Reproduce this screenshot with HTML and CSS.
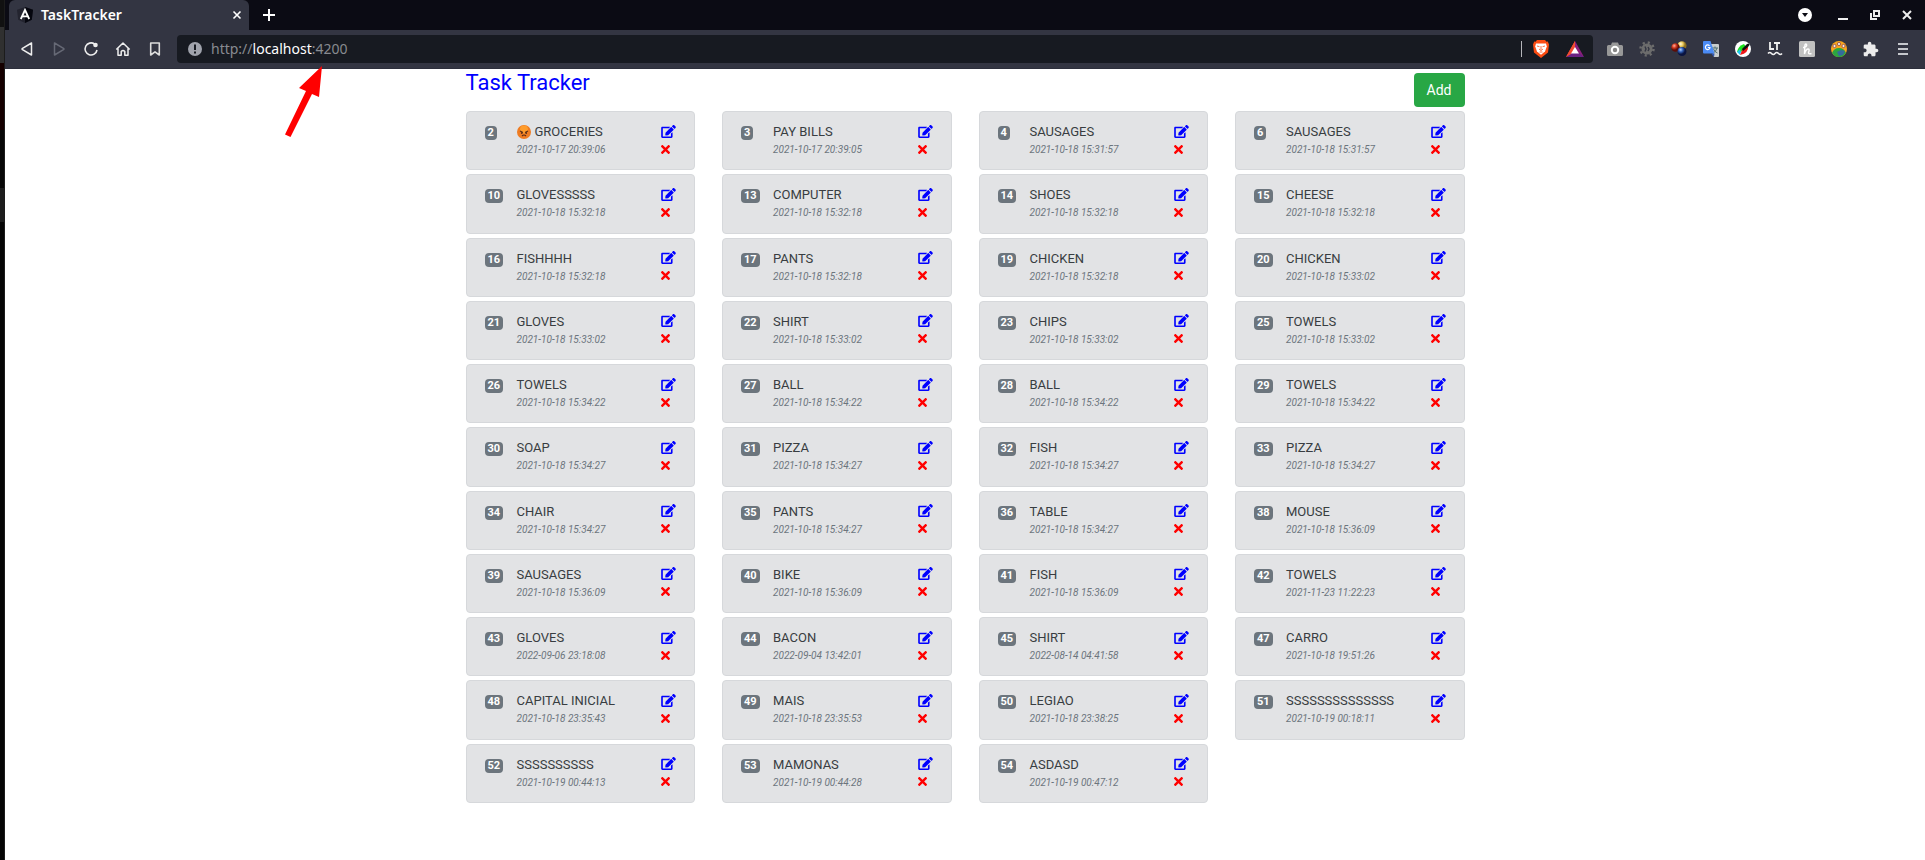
FILE: index.html
```html
<!DOCTYPE html>
<html lang="en">
<head>
<meta charset="utf-8">
<title>TaskTracker</title>
<link rel="stylesheet" href="styles.css">
</head>
<body>
<div class="desktop-edge" aria-hidden="true"><span class="edge-top"></span><span class="edge-gray"></span><span class="edge-red"></span><span class="edge-black"></span><span class="edge-item"></span></div>
<div class="window">
  <header class="browser">
    <div class="tab-strip">
      <div class="tab">
        <svg width="16" height="16" viewBox="0 0 16 16"><path d="M8 0l8 2.800-1.200 10L8 16l-6.800-3.200L0 2.800z" fill="#23242f"/><path d="M8 0l8 2.800-1.200 10L8 16z" fill="#05060e"/><path d="M3.800 12L8 3l4.200 9M5.500 9.300h5" fill="none" stroke="#fff" stroke-width="1.800"/></svg>
        <span class="tab-title">TaskTracker</span>
        <button class="tab-button" aria-label="Close tab"><svg width="10" height="10" viewBox="0 0 10 10"><path d="M1.500 1.500l7 7m0-7l-7 7" stroke="#fff" stroke-width="1.600"/></svg></button>
      </div>
      <button class="tool new-tab" aria-label="New tab"><svg width="12" height="12" viewBox="0 0 12 12"><path d="M6 0v12M0 6h12" stroke="#fff" stroke-width="2"/></svg></button>
      <div class="window-controls">
        <button class="tool tab-search" aria-label="Search tabs"><svg width="14" height="14" viewBox="0 0 14 14"><circle cx="7" cy="7" r="7" fill="#fff"/><path d="M4 5h6L7 9z" fill="#0b0b14"/></svg></button>
        <button class="tool" aria-label="Minimize"><svg width="10" height="10" viewBox="0 0 10 10"><path d="M0 9h10" stroke="#eee" stroke-width="2"/></svg></button>
        <button class="tool" aria-label="Restore"><svg width="10" height="10" viewBox="0 0 10 10"><path d="M4 1h5v5H4zM1 3v6h6" fill="none" stroke="#eee" stroke-width="2"/></svg></button>
        <button class="tool" aria-label="Close"><svg width="10" height="10" viewBox="0 0 10 10"><path d="M1 1l8 8m0-8L1 9" stroke="#eee" stroke-width="2"/></svg></button>
      </div>
    </div>
    <div class="toolbar">
      <button class="tool" aria-label="Back"><svg width="16" height="16" viewBox="0 0 16 16"><path d="M12.500 2v12L3.500 8.700q-.9-.7 0-1.400z" fill="none" stroke="#eee" stroke-width="1.500" stroke-linejoin="round"/></svg></button>
      <button class="tool" aria-label="Forward"><svg width="16" height="16" viewBox="0 0 16 16"><path d="M3.500 2v12l9-5.300q.9-.7 0-1.400z" fill="none" stroke="#666975" stroke-width="1.500" stroke-linejoin="round"/></svg></button>
      <button class="tool" aria-label="Reload"><svg width="16" height="16" viewBox="0 0 16 16"><path d="M11.500 3A6 6 0 1 0 14 9" fill="none" stroke="#eee" stroke-width="1.600"/><circle cx="12.500" cy="4" r="2.300" fill="#eee"/></svg></button>
      <button class="tool" aria-label="Home"><svg width="16" height="16" viewBox="0 0 16 16"><path d="M1.300 8.500L8 2l6.700 6.500M3 7.500v6.700h3.200v-3.700q1.800-2 3.600 0v3.700H13V7.500" fill="none" stroke="#eee" stroke-width="1.500" stroke-linejoin="round"/></svg></button>
      <button class="tool" aria-label="Bookmark"><svg width="16" height="16" viewBox="0 0 16 16"><path d="M3.700 2h8.600v12L8 10.800 3.700 14z" fill="none" stroke="#ddd" stroke-width="1.600" stroke-linejoin="round"/></svg></button>
      <div class="address-bar">
        <svg class="site-info" width="14" height="14" viewBox="0 0 14 14"><circle cx="7" cy="7" r="7" fill="#a0a3ac"/><path d="M7 2.500v5.500M7 9.500v2" stroke="#171a21" stroke-width="2"/></svg>
        <div class="address" role="textbox" contenteditable="true" spellcheck="false" aria-label="Address">http://<span class="address-host">localhost</span>:4200</div>
        <span class="address-divider"></span>
        <button class="shield" aria-label="Shields"><svg width="16" height="18" viewBox="0 0 16 18"><path d="M4 0h8l1.500 1.800 1.300-.2 1.200 3-1 8L8 18l-7-5.400-1-8 1.200-3 1.300.2z" fill="#fb4c12"/><path d="M3 3.500h10l.8 3-1.800 5L8 14.800 4 11.500l-1.800-5z" fill="#fff"/><path d="M4 6l2.500.7M12 6l-2.500.7M8 6v3.500M6 9l2 1.500L10 9M6.500 12h3" stroke="#fb4c12" stroke-width=".8" fill="none"/></svg></button>
        <button class="shield" aria-label="Rewards"><svg width="18" height="16" viewBox="0 0 18 16"><path d="M9 0L0 16l9-5z" fill="#ff4b2b"/><path d="M9 0l9 16-9-5z" fill="#8c1f7b"/><path d="M0 16h18l-5-4H5z" fill="#6b2183"/><path d="M9 0v6l-4 7-5 3z" fill="#f24b32"/><path d="M9 6l4 6.500H5z" fill="#fff"/></svg></button>
      </div>
      <button class="tool" aria-label="Screenshot"><svg width="16" height="14" viewBox="0 0 16 14"><path d="M1.500 3H4l1-2.500h6L12 3h2.500Q16 3 16 4.500v8q0 1.500-1.500 1.500h-13Q0 14 0 12.500v-8Q0 3 1.500 3z" fill="#989898"/><circle cx="8" cy="8" r="3.200" fill="#888" stroke="#fff" stroke-width="2"/></svg></button>
      <button class="tool" aria-label="Debugger"><svg width="16" height="16" viewBox="0 0 16 16"><circle cx="8" cy="8" r="5.500" fill="#6c6c6c"/><circle cx="8" cy="8" r="6.500" fill="none" stroke="#6c6c6c" stroke-width="2.500" stroke-dasharray="2.100 3"/><path d="M6 5.500l1 2.500-1 2.500M9 6l1 2-1 2" stroke="#333542" fill="none" stroke-width="1.400"/></svg></button>
      <button class="tool" aria-label="Color spheres"><svg width="16" height="16" viewBox="0 0 16 16"><defs><radialGradient id="r" cx=".35" cy=".3"><stop stop-color="#ffb0a0"/><stop offset=".5" stop-color="#d33b20"/><stop offset="1" stop-color="#5c0c08"/></radialGradient><radialGradient id="y" cx=".35" cy=".3"><stop stop-color="#fffbe0"/><stop offset=".5" stop-color="#f0d060"/><stop offset="1" stop-color="#8d7020"/></radialGradient><radialGradient id="b" cx=".35" cy=".3"><stop stop-color="#b0d0ff"/><stop offset=".5" stop-color="#3060b8"/><stop offset="1" stop-color="#0a1440"/></radialGradient></defs><circle cx="11" cy="4.800" r="4.500" fill="url(#y)"/><circle cx="4.500" cy="6.500" r="4.300" fill="url(#r)"/><circle cx="11" cy="10.500" r="4.500" fill="url(#b)"/></svg></button>
      <button class="tool" aria-label="Translate"><svg width="16" height="16" viewBox="0 0 16 16"><path d="M6 3h9q1 0 1 1v11q0 1-1 1h-4z" fill="#c8cccc"/><path d="M9 7h6M12 5.500V7m2 0q-1 4-4 5m.5-4q1 3 4 4" stroke="#4f6f70" fill="none"/><path d="M1 0h6.500l4 12.500H1q-1 0-1-1V1q0-1 1-1z" fill="#4b8bf5"/><path d="M8 12.500h3.500L11 16z" fill="#3157ac"/><path d="M6.500 4.800A2.300 2.300 0 1 0 7 6.500H4.800" stroke="#fff" stroke-width="1.200" fill="none"/></svg></button>
      <button class="tool" aria-label="Color picker"><svg width="16" height="16" viewBox="0 0 16 16"><circle cx="8" cy="8" r="8" fill="#fff"/><path d="M2 11Q3 5 9 3l2 3-5 5z" fill="#1ce01c"/><path d="M2 11l3-3 1 3-1 3z" fill="#20c5f0"/><path d="M5 14l3-7 5-2q1 7-8 9z" fill="#f01818"/><path d="M7 8l5-5 2-.5.5 1.500L13 6l-5 4z" fill="#111"/></svg></button>
      <button class="tool" aria-label="Grammar checker"><svg width="16" height="14" viewBox="0 0 16 14"><path d="M3 0v7h4M7 1h6M10 1v7" fill="none" stroke="#f1f1f1" stroke-width="1.800"/><path d="M1 11.500q1.700-2 3.500 0t3.500 0 3.500 0 3.500 0" fill="none" stroke="#f1f1f1" stroke-width="1.600"/></svg></button>
      <button class="tool" aria-label="Coupons"><svg width="16" height="16" viewBox="0 0 16 16"><rect width="16" height="16" rx="1.500" fill="#c1c1c1"/><path d="M4 6.500Q8.500 6 7.500 3.200 6 2 5.800 5.500L5.500 13q1.500-5 3.500-5t.5 3.500q0 2 3 1" fill="none" stroke="#fff" stroke-width="1.400"/></svg></button>
      <button class="tool" aria-label="World"><svg width="16" height="16" viewBox="0 0 16 16"><circle cx="8" cy="8" r="8" fill="#f7a51c"/><path d="M1 12q2-5 7-5t7 5a8 8 0 0 1-14 0z" fill="#2ca541"/><path d="M6 11l4-2 4 1-2 4-4 1z" fill="#356b9c"/><circle cx="3.500" cy="5" r="1.600" fill="#eee" stroke="#a65b50"/><circle cx="8" cy="3" r="1.600" fill="#eee" stroke="#a65b50"/><circle cx="12.500" cy="5" r="1.600" fill="#eee" stroke="#a65b50"/></svg></button>
      <button class="tool" aria-label="Extensions"><svg width="16" height="16" viewBox="1 0 23 23"><path fill="#ececec" d="M20.500 11H19V7c0-1.100-.9-2-2-2h-4V3.500C13 2.120 11.880 1 10.500 1S8 2.120 8 3.500V5H4c-1.100 0-1.990.9-1.990 2v3.800H3.500c1.490 0 2.700 1.210 2.700 2.700s-1.210 2.700-2.700 2.700H2V20c0 1.100.9 2 2 2h3.800v-1.500c0-1.490 1.210-2.700 2.700-2.700s2.700 1.210 2.700 2.700V22H17c1.100 0 2-.9 2-2v-4h1.500c1.380 0 2.500-1.120 2.500-2.500S21.880 11 20.500 11z"/></svg></button>
      <button class="tool" aria-label="Menu"><svg width="10" height="12" viewBox="0 0 10 12"><path d="M0 1h10M0 6h10M0 11h10" stroke="#c5c7cc" stroke-width="1.800"/></svg></button>
    </div>
  </header>
  <main class="container">
    <div class="page-header">
      <h1 class="page-title">Task Tracker</h1>
      <button class="add-button">Add</button>
    </div>
    <div class="task-list" id="tasks"></div>
  </main>
  <svg class="pointer-arrow" width="40" height="72" viewBox="0 0 40 72" aria-hidden="true"><path d="M37 0L14 22l7 3L0 68.500l5.500 2.500L27 28l7 3z" fill="#f00"/></svg>
</div>
<svg hidden>
  <symbol id="icon-edit" viewBox="0 0 576 512"><path d="M402.600 83.200l90.200 90.200c3.800 3.800 3.800 10 0 13.800L274.400 405.600l-92.800 10.300c-12.400 1.400-22.900-9.100-21.500-21.500l10.300-92.800L388.800 83.200c3.800-3.800 10-3.800 13.800 0zm162-22.900l-48.800-48.800c-15.200-15.200-39.900-15.200-55.200 0l-35.400 35.400c-3.800 3.800-3.800 10 0 13.800l90.200 90.200c3.800 3.800 10 3.800 13.800 0l35.400-35.400c15.200-15.300 15.200-40 0-55.200zM384 346.200V448H64V128h229.800c3.200 0 6.200-1.300 8.500-3.500l40-40c7.600-7.600 2.200-20.500-8.500-20.500H48C21.500 64 0 85.500 0 112v352c0 26.500 21.500 48 48 48h352c26.500 0 48-21.500 48-48V306.200c0-10.700-12.900-16-20.500-8.500l-40 40c-2.200 2.300-3.500 5.300-3.500 8.500z"/></symbol>
  <symbol id="icon-times" viewBox="0 0 352 512"><path d="M242.720 256l100.070-100.070c12.280-12.280 12.280-32.190 0-44.480l-22.240-22.240c-12.280-12.280-32.190-12.280-44.480 0L176 189.280 75.930 89.210c-12.280-12.280-32.190-12.280-44.480 0L9.210 111.450c-12.280 12.280-12.280 32.190 0 44.480L109.280 256 9.210 356.070c-12.280 12.280-12.280 32.190 0 44.480l22.240 22.240c12.280 12.280 32.200 12.280 44.480 0L176 322.720l100.070 100.070c12.280 12.280 32.200 12.280 44.480 0l22.240-22.240c12.280-12.280 12.280-32.190 0-44.480L242.720 256z"/></symbol>
  <symbol id="icon-angry" viewBox="0 0 14 14"><circle cx="7" cy="7" r="7" fill="#ef7c22"/><circle cx="7" cy="4.500" r="4" fill="#ff9d2c"/><path d="M3 6l3 1.500M11 6L8 7.500M5 11q2-2 4 0" fill="none" stroke="#5a2b18" stroke-width="1.100"/><circle cx="4.800" cy="8" r=".9" fill="#5a2b18"/><circle cx="9.200" cy="8" r=".9" fill="#5a2b18"/></symbol>
</svg>
<script src="tasks.js"></script>
</body>
</html>
```
FILE: styles.css
```css
* { box-sizing: border-box; }
body { margin: 0; min-height: 100vh; display: flex; background: #fff; color: #212529; font-family: Roboto, sans-serif; overflow-x: hidden; }
button { margin: 0; padding: 0; border: 0; background: none; font: inherit; cursor: pointer; }
svg { display: block; flex: none; }
svg[hidden] { display: none; }
.desktop-edge { width: 5px; flex: none; display: flex; flex-direction: column; background: #050505; border-right: 1px solid #1c1c1c; }
.edge-top { height: 27px; background: #111; }
.edge-gray { height: 36px; background: #303030; }
.edge-red { height: 67px; background: #150000; }
.edge-black { height: 58px; background: #070707; }
.edge-item { height: 34px; background: #1d1d1d; }
.window { position: relative; flex: 1; min-width: 0; }

.browser { font-family: "Noto Sans", sans-serif; color: #fff; }
.tab-strip { display: flex; height: 30px; padding: 0 2px 0 4px; background: #0b0b14; }
.tab { display: flex; align-items: center; gap: 8px; width: 240px; padding: 0 2px 0 8px; border-radius: 6px 6px 0 0; background: #333542; }
.tab-title { flex: 1; font-size: 14px; font-weight: 600; line-height: 20px; }
.tab-button { display: flex; align-items: center; justify-content: center; width: 20px; height: 20px; }
.window-controls { display: flex; margin-left: auto; }
.tab-search { margin-right: 6px; }
.toolbar { display: flex; align-items: center; height: 39px; padding: 0 6px; background: #333542; border-bottom: 1px solid #2d2f3c; }
.tool { display: flex; flex: none; align-items: center; justify-content: center; width: 32px; height: 30px; }
.new-tab { margin-left: 4px; }
.address-bar { display: flex; flex: 1; align-items: center; height: 28px; margin: 0 6px; padding: 0 1px 0 11px; border-radius: 4px; background: #171a21; }
.address { flex: 1; margin-left: 9px; font-size: 14px; line-height: 20px; color: #888b90; outline: 0; }
.address-host { color: #fff; }
.address-divider { width: 1px; height: 16px; margin-right: 2px; background: #b5b6ba; }
.shield { display: flex; align-items: center; justify-content: center; width: 34px; height: 28px; }

.container { max-width: 1025px; margin: 0 auto; padding: 0 13px; }
.page-header { display: flex; justify-content: space-between; align-items: flex-start; }
.page-title { margin: 0; font-size: 22px; font-weight: 400; line-height: 28px; color: #00f; }
.add-button { margin: 4px 0; padding: 0 13px; border-radius: 4px; background: #28a745; color: #fff; font-size: 14px; line-height: 34px; }
.task-list { display: grid; grid-template-columns: repeat(4, minmax(0, 1fr)); grid-auto-rows: 1fr; gap: 4px 27px; min-height: 692px; }
.task { display: grid; grid-template-columns: 32px 1fr 15px; padding: 11px 18px 10px; border: 1px solid #d6d8db; border-radius: 4px; background: #e2e3e5; }
.task-id { justify-self: start; align-self: start; margin-top: 3px; padding: 0 3px; border-radius: 4px; background: #6c757d; color: #fff; font-size: 11px; font-weight: 700; line-height: 14px; }
.task-name { display: flex; align-items: center; gap: 4px; font-size: 13px; line-height: 18px; color: #383d41; white-space: nowrap; }
.task-date { display: block; font-size: 10px; font-style: italic; line-height: 18px; color: #6c757d; white-space: nowrap; }
.task-actions { display: flex; flex-direction: column; align-items: flex-start; }
.task-action { display: flex; align-items: center; height: 18px; padding-bottom: 2px; }
.edit { fill: #00f; }
.delete { fill: #f00; }

/* callout drawn over the toolbar and page */
.pointer-arrow { position: absolute; left: 280px; top: 66px; }
```
FILE: tasks.js
```js
const tasks = `2|GROCERIES|2021-10-17 20:39:06
3|PAY BILLS|2021-10-17 20:39:05
4|SAUSAGES|2021-10-18 15:31:57
6|SAUSAGES|2021-10-18 15:31:57
10|GLOVESSSSS|2021-10-18 15:32:18
13|COMPUTER|2021-10-18 15:32:18
14|SHOES|2021-10-18 15:32:18
15|CHEESE|2021-10-18 15:32:18
16|FISHHHH|2021-10-18 15:32:18
17|PANTS|2021-10-18 15:32:18
19|CHICKEN|2021-10-18 15:32:18
20|CHICKEN|2021-10-18 15:33:02
21|GLOVES|2021-10-18 15:33:02
22|SHIRT|2021-10-18 15:33:02
23|CHIPS|2021-10-18 15:33:02
25|TOWELS|2021-10-18 15:33:02
26|TOWELS|2021-10-18 15:34:22
27|BALL|2021-10-18 15:34:22
28|BALL|2021-10-18 15:34:22
29|TOWELS|2021-10-18 15:34:22
30|SOAP|2021-10-18 15:34:27
31|PIZZA|2021-10-18 15:34:27
32|FISH|2021-10-18 15:34:27
33|PIZZA|2021-10-18 15:34:27
34|CHAIR|2021-10-18 15:34:27
35|PANTS|2021-10-18 15:34:27
36|TABLE|2021-10-18 15:34:27
38|MOUSE|2021-10-18 15:36:09
39|SAUSAGES|2021-10-18 15:36:09
40|BIKE|2021-10-18 15:36:09
41|FISH|2021-10-18 15:36:09
42|TOWELS|2021-11-23 11:22:23
43|GLOVES|2022-09-06 23:18:08
44|BACON|2022-09-04 13:42:01
45|SHIRT|2022-08-14 04:41:58
47|CARRO|2021-10-18 19:51:26
48|CAPITAL INICIAL|2021-10-18 23:35:43
49|MAIS|2021-10-18 23:35:53
50|LEGIAO|2021-10-18 23:38:25
51|SSSSSSSSSSSSSS|2021-10-19 00:18:11
52|SSSSSSSSSS|2021-10-19 00:44:13
53|MAMONAS|2021-10-19 00:44:28
54|ASDASD|2021-10-19 00:47:12`.split("\n").map(line => line.split("|"));

const angry = '<svg width="14" height="14" role="img" aria-label="Angry face"><use href="#icon-angry"/></svg>';

document.getElementById("tasks").innerHTML = tasks.map(([id, name, date]) => `
  <article class="task">
    <span class="task-id">${id}</span>
    <div>
      <span class="task-name">${id === "2" ? angry : ""}${name}</span>
      <time class="task-date">${date}</time>
    </div>
    <div class="task-actions">
      <button class="task-action edit" aria-label="Edit ${name}"><svg width="15" height="13"><use href="#icon-edit"/></svg></button>
      <button class="task-action delete" aria-label="Delete ${name}"><svg width="9" height="13"><use href="#icon-times"/></svg></button>
    </div>
  </article>`).join("");
```
